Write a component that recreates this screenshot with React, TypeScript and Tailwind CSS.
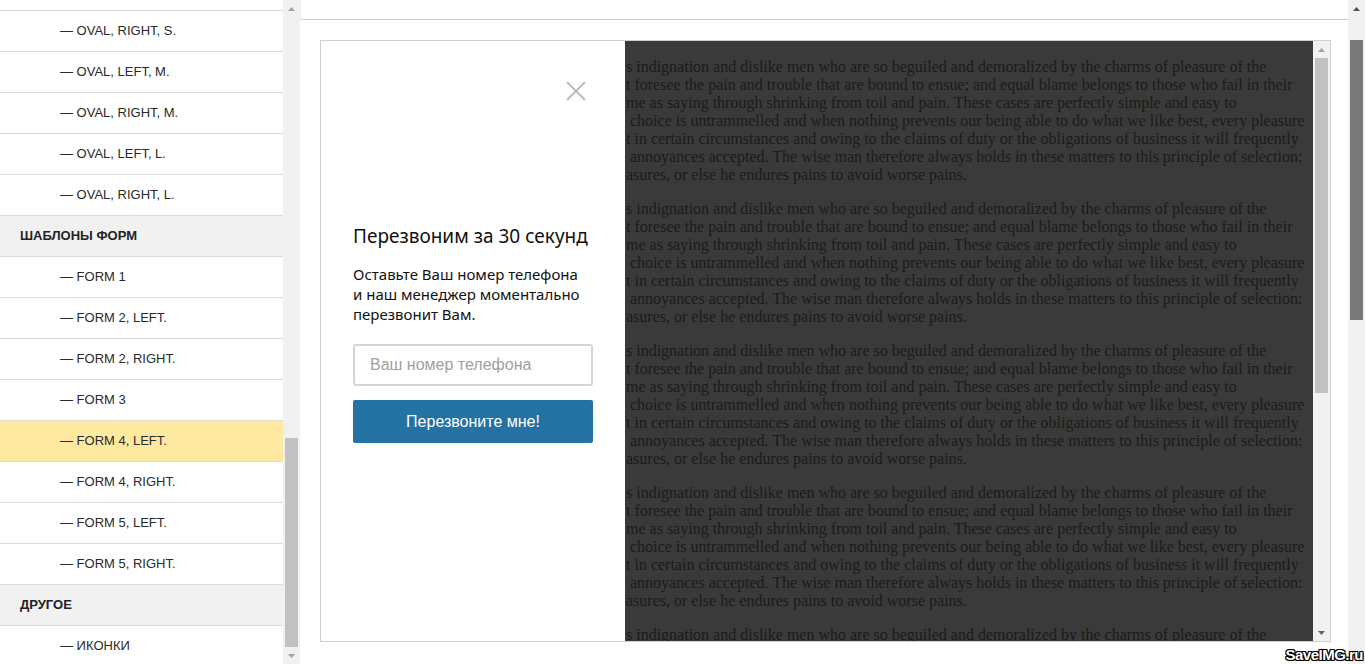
import React from "react";

const sideRows: { label: string; kind: "item" | "head" | "active" }[] = [
  { label: "— OVAL, RIGHT, S.", kind: "item" },
  { label: "— OVAL, LEFT, M.", kind: "item" },
  { label: "— OVAL, RIGHT, M.", kind: "item" },
  { label: "— OVAL, LEFT, L.", kind: "item" },
  { label: "— OVAL, RIGHT, L.", kind: "item" },
  { label: "ШАБЛОНЫ ФОРМ", kind: "head" },
  { label: "— FORM 1", kind: "item" },
  { label: "— FORM 2, LEFT.", kind: "item" },
  { label: "— FORM 2, RIGHT.", kind: "item" },
  { label: "— FORM 3", kind: "item" },
  { label: "— FORM 4, LEFT.", kind: "active" },
  { label: "— FORM 4, RIGHT.", kind: "item" },
  { label: "— FORM 5, LEFT.", kind: "item" },
  { label: "— FORM 5, RIGHT.", kind: "item" },
  { label: "ДРУГОЕ", kind: "head" },
  { label: "— ИКОНКИ", kind: "item" },
];

const lines = [
  "s indignation and dislike men who are so beguiled and demoralized by the charms of pleasure of the",
  "t foresee the pain and trouble that are bound to ensue; and equal blame belongs to those who fail in their",
  "me as saying through shrinking from toil and pain. These cases are perfectly simple and easy to",
  " choice is untrammelled and when nothing prevents our being able to do what we like best, every pleasure",
  "t in certain circumstances and owing to the claims of duty or the obligations of business it will frequently",
  " annoyances accepted. The wise man therefore always holds in these matters to this principle of selection:",
  "asures, or else he endures pains to avoid worse pains.",
];

const ArrowUp = ({ color = "#a3a3a3" }: { color?: string }) => (
  <svg width="7" height="4" viewBox="0 0 7 4">
    <path d="M0 4 L3.5 0 L7 4 Z" fill={color} />
  </svg>
);

const ArrowDown = ({ color = "#a3a3a3" }: { color?: string }) => (
  <svg width="7" height="4" viewBox="0 0 7 4">
    <path d="M0 0 L3.5 4 L7 0 Z" fill={color} />
  </svg>
);

const Sidebar = () => {
  return (
    <div className="flex w-[300px] h-full shrink-0">
      <div className="w-[283px] h-full overflow-hidden bg-white">
        <div className="h-[11px] border-b border-[#dcdcdc]" />
        {sideRows.map((r) => (
          <div
            key={r.label}
            className={
              r.kind === "head"
                ? "h-[41px] flex items-center pl-5 border-b border-[#dcdcdc] bg-[#f1f1f1] text-[13px] font-bold text-[#222]"
                : r.kind === "active"
                ? "h-[41px] flex items-center pl-[60px] border-b border-[#dcdcdc] bg-[#ffe9a1] text-[13px] text-[#2a2a2a]"
                : "h-[41px] flex items-center pl-[60px] border-b border-[#dcdcdc] text-[13px] text-[#2a2a2a]"
            }
          >
            {r.label}
          </div>
        ))}
      </div>
      <div className="w-[17px] h-full bg-[#f1f1f1] flex flex-col items-center">
        <div className="h-[17px] flex items-center justify-center">
          <ArrowUp />
        </div>
        <div className="flex-1 w-full px-[2px] flex flex-col">
          <div className="h-[421px]" />
          <div className="flex-1 bg-[#c1c1c1]" />
        </div>
        <div className="h-[17px] flex items-center justify-center">
          <ArrowDown />
        </div>
      </div>
    </div>
  );
};

const Popup = () => {
  return (
    <div className="w-[304px] shrink-0 bg-white flex flex-col px-8">
      <div className="flex justify-end pt-10 pr-[7px]">
        <svg width="20" height="20" viewBox="0 0 20 20">
          <path d="M1 1 L19 19 M19 1 L1 19" stroke="#bdbdbd" strokeWidth="2" />
        </svg>
      </div>
      <div
        className="mt-[123px] text-[19px] leading-6 text-[#111]"
        style={{ fontFamily: "'Noto Sans', sans-serif" }}
      >
        Перезвоним за 30 секунд
      </div>
      <div
        className="mt-4 text-[15px] leading-5 text-[#111]"
        style={{ fontFamily: "'Noto Sans', sans-serif" }}
      >
        Оставьте Ваш номер телефона
        <br />и наш менеджер моментально
        <br />
        перезвонит Вам.
      </div>
      <div className="mt-5 h-[42px] w-[240px] border-2 border-[#d6d6d6] rounded-[3px] flex items-center pl-[15px] text-[16px] text-[#a0a0a0]">
        Ваш номер телефона
      </div>
      <div className="mt-[14px] h-[43px] w-[240px] bg-[#2372a3] rounded-[2px] flex items-center justify-center text-[16px] text-white">
        Перезвоните мне!
      </div>
    </div>
  );
};

const Frame = () => {
  return (
    <div className="h-[602px] w-[1011px] border border-[#cfcfcf] flex overflow-hidden">
      <Popup />
      <div
        className="flex-1 bg-[#3a3a3a] pt-[17px] overflow-hidden text-[16px] leading-[18px] text-[#1b1b1b]"
        style={{ fontFamily: "'Liberation Serif', serif" }}
      >
        {[0, 1, 2, 3, 4].map((p) => (
          <div key={p} className="mb-4">
            {lines.map((l, i) => (
              <div key={i} className="whitespace-pre overflow-hidden pl-px">
                {l}
              </div>
            ))}
          </div>
        ))}
      </div>
      <div className="w-[17px] bg-[#f1f1f1] flex flex-col items-center">
        <div className="h-[17px] flex items-center justify-center">
          <ArrowUp />
        </div>
        <div className="w-full px-[2px]">
          <div className="h-[335px] bg-[#c1c1c1]" />
        </div>
        <div className="flex-1" />
        <div className="h-[17px] flex items-center justify-center">
          <ArrowDown color="#606060" />
        </div>
      </div>
    </div>
  );
};

export default function App() {
  return (
    <div
      className="w-[1365px] h-[664px] flex overflow-hidden bg-white"
      style={{ fontFamily: "'Liberation Sans', Arial, sans-serif" }}
    >
      <Sidebar />
      <div className="flex-1 flex flex-col">
        <div className="h-5 border-b border-[#cccccc] border-l border-l-[#eeeeee]" />
        <div className="pl-5 pt-5">
          <Frame />
        </div>
      </div>
      <div className="relative w-[17px] h-full bg-[#f1f1f1] flex flex-col items-center">
        <div className="h-[17px] flex items-center justify-center">
          <ArrowUp color="#505050" />
        </div>
        <div className="w-full px-[2px]">
          <div className="mt-[23px] h-[280px] bg-[#787878]" />
        </div>
        <div
          className="absolute right-[2px] bottom-[1px] text-[15px] leading-[17px] font-bold text-white tracking-[-0.5px] whitespace-nowrap"
          style={{
            fontFamily: "'Liberation Sans', Arial, sans-serif",
            textShadow:
              "1px 0 #000, -1px 0 #000, 0 1px #000, 0 -1px #000, 1px 1px #000, -1px -1px #000, 1px -1px #000, -1px 1px #000",
          }}
        >
          SaveIMG.ru
        </div>
      </div>
    </div>
  );
}
